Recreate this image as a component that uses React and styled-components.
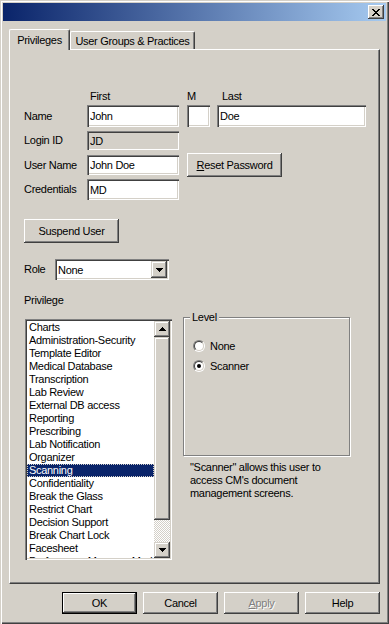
import styled, { createGlobalStyle } from "styled-components";

const GlobalStyle = createGlobalStyle`
  html, body {
    margin: 0;
    padding: 0;
    background: #d4d0c8;
  }
  body {
    font-family: "Liberation Sans", Arial, sans-serif;
    font-size: 11px;
    letter-spacing: -0.3px;
    color: #000;
  }
  * {
    box-sizing: border-box;
  }
`;

const privileges = [
  "Charts",
  "Administration-Security",
  "Template Editor",
  "Medical Database",
  "Transcription",
  "Lab Review",
  "External DB access",
  "Reporting",
  "Prescribing",
  "Lab Notification",
  "Organizer",
  "Scanning",
  "Confidentiality",
  "Break the Glass",
  "Restrict Chart",
  "Decision Support",
  "Break Chart Lock",
  "Facesheet",
  "Preferences Manager Module",
];

const raised =
  "inset -1px -1px 0 #404040, inset 1px 1px 0 #fff, inset -2px -2px 0 #808080";
const sunken =
  "inset 1px 1px 0 #808080, inset 2px 2px 0 #404040, inset -1px -1px 0 #fff, inset -2px -2px 0 #d4d0c8";

const Window = styled.div`
  width: 389px;
  height: 624px;
  padding: 3px;
  display: flex;
  flex-direction: column;
  background: #d4d0c8;
  box-shadow: inset 1px 1px 0 #d4d0c8, inset 2px 2px 0 #fff,
    inset -1px -1px 0 #404040, inset -2px -2px 0 #808080;
`;

const TitleBar = styled.div`
  height: 18px;
  flex: none;
  display: flex;
  align-items: center;
  justify-content: flex-end;
  padding-right: 2px;
  background: linear-gradient(to right, #0a246a, #a6caf0);
`;

const CloseButton = styled.div`
  width: 16px;
  height: 14px;
  display: flex;
  align-items: center;
  justify-content: center;
  background: #d4d0c8;
  box-shadow: ${raised};
`;

const TabStrip = styled.div`
  display: flex;
  align-items: flex-end;
  height: 20px;
  margin: 8px 0 0 6px;
  position: relative;
  z-index: 1;
`;

const Tab = styled.div`
  width: ${(p) => p.w}px;
  height: ${(p) => (p.active ? 21 : 18)}px;
  margin-bottom: ${(p) => (p.active ? -1 : 0)}px;
  padding-bottom: ${(p) => (p.active ? 1 : 0)}px;
  display: flex;
  align-items: center;
  justify-content: center;
  background: #d4d0c8;
  border-top: 1px solid #fff;
  border-left: 1px solid #fff;
  border-right: 1px solid #404040;
  border-radius: 2px 2px 0 0;
  box-shadow: inset -1px 0 0 #808080;
`;

const Panel = styled.div`
  width: 371px;
  height: 535px;
  margin-left: 6px;
  padding-left: 14px;
  display: flex;
  flex-direction: column;
  border-top: 1px solid #fff;
  border-left: 1px solid #fff;
  border-right: 1px solid #404040;
  border-bottom: 1px solid #404040;
  box-shadow: inset -1px -1px 0 #808080;
`;

const Row = styled.div`
  display: flex;
  align-items: center;
  height: ${(p) => p.h}px;
  margin-top: ${(p) => p.mt}px;
`;

const Label = styled.span`
  width: ${(p) => p.w}px;
  flex: none;
  line-height: 13px;
  white-space: nowrap;
`;

const TextBox = styled.input`
  width: ${(p) => p.w}px;
  height: ${(p) => p.h}px;
  margin-left: ${(p) => p.ml || 0}px;
  padding: 0 3px;
  border: none;
  outline: none;
  font: inherit;
  letter-spacing: inherit;
  color: #000;
  background: ${(p) => (p.disabled ? "#d4d0c8" : "#fff")};
  box-shadow: ${sunken};
`;

const Button = styled.div`
  width: ${(p) => p.w}px;
  height: ${(p) => p.h}px;
  margin-left: ${(p) => p.ml || 0}px;
  flex: none;
  display: flex;
  align-items: center;
  justify-content: center;
  background: #d4d0c8;
  color: ${(p) => (p.disabled ? "#808080" : "#000")};
  text-shadow: ${(p) => (p.disabled ? "1px 1px 0 #fff" : "none")};
  box-shadow: ${(p) =>
    p.primary
      ? "inset 0 0 0 1px #000, inset -2px -2px 0 #404040, inset 2px 2px 0 #fff, inset -3px -3px 0 #808080"
      : raised};
`;

const Select = styled.div`
  width: 114px;
  height: 21px;
  display: flex;
  align-items: center;
  padding: 2px;
  background: #fff;
  box-shadow: ${sunken};
`;

const SelectValue = styled.span`
  flex: 1;
  padding-left: 1px;
`;

const ArrowButton = styled.div`
  width: ${(p) => p.w || 16}px;
  height: ${(p) => p.h || 16}px;
  flex: none;
  display: flex;
  align-items: center;
  justify-content: center;
  background: #d4d0c8;
  box-shadow: inset -1px -1px 0 #404040, inset 1px 1px 0 #d4d0c8,
    inset -2px -2px 0 #808080, inset 2px 2px 0 #fff;
`;

const Lower = styled.div`
  display: flex;
  align-items: flex-start;
  margin-top: 10px;
`;

const ListBox = styled.div`
  width: 147px;
  height: 241px;
  margin: 2px 0 0 1px;
  padding: 2px;
  display: flex;
  background: #fff;
  box-shadow: ${sunken};
`;

const Items = styled.div`
  flex: 1;
  overflow: hidden;
`;

const Item = styled.div`
  height: 13px;
  line-height: 13px;
  padding-left: 2px;
  white-space: nowrap;
  color: ${(p) => (p.selected ? "#fff" : "#000")};
  background: ${(p) => (p.selected ? "#0a246a" : "transparent")};
  outline: ${(p) => (p.selected ? "1px dotted #d4d0c8" : "none")};
  outline-offset: -1px;
`;

const ScrollBar = styled.div`
  width: 16px;
  display: flex;
  flex-direction: column;
`;

const Thumb = styled.div`
  height: 183px;
  background: #d4d0c8;
  box-shadow: inset -1px -1px 0 #404040, inset 1px 1px 0 #d4d0c8,
    inset -2px -2px 0 #808080, inset 2px 2px 0 #fff;
`;

const Track = styled.div`
  flex: 1;
  background-image: conic-gradient(#fff 0 25%, #d4d0c8 0 50%, #fff 0 75%, #d4d0c8 0);
  background-size: 2px 2px;
`;

const RightColumn = styled.div`
  margin-left: 11px;
  display: flex;
  flex-direction: column;
`;

const Group = styled.div`
  width: 167px;
  height: 139px;
  padding-left: 9px;
  display: flex;
  flex-direction: column;
  border: 1px solid #808080;
  box-shadow: inset 1px 1px 0 #fff, 1px 1px 0 #fff;
`;

const Legend = styled.span`
  align-self: flex-start;
  margin: -7px 0 0 -3px;
  padding: 0 2px;
  line-height: 13px;
  background: #d4d0c8;
`;

const RadioRow = styled.div`
  display: flex;
  align-items: center;
  gap: 5px;
  height: 16px;
  margin-top: ${(p) => p.mt}px;
`;

const RadioOuter = styled.div`
  width: 12px;
  height: 12px;
  border-radius: 50%;
  border: 1px solid;
  border-color: #808080 #fff #fff #808080;
  display: flex;
`;

const RadioInner = styled.div`
  flex: 1;
  border-radius: 50%;
  border: 1px solid;
  border-color: #404040 #d4d0c8 #d4d0c8 #404040;
  background: #fff;
  display: flex;
  align-items: center;
  justify-content: center;
`;

const RadioDot = styled.div`
  width: 4px;
  height: 4px;
  border-radius: 50%;
  background: #000;
`;

const Note = styled.p`
  width: 150px;
  margin: 5px 0 0 7px;
  line-height: 13px;
`;

const Footer = styled.div`
  display: flex;
  justify-content: flex-end;
  gap: 6px;
  margin: 8px 6px 0 0;
`;

const CloseGlyph = () => (
  <svg width="8" height="7" viewBox="0 0 8 7" shapeRendering="crispEdges">
    <path
      d="M0 0h2v1H0zM6 0h2v1H6zM1 1h2v1H1zM5 1h2v1H5zM2 2h4v1H2zM3 3h2v1H3zM2 4h4v1H2zM1 5h2v1H1zM5 5h2v1H5zM0 6h2v1H0zM6 6h2v1H6z"
      fill="#000"
    />
  </svg>
);

const Arrow = ({ up }) => (
  <svg width="7" height="4" viewBox="0 0 7 4" shapeRendering="crispEdges">
    <path
      d={up ? "M3 0h1v1H3zM2 1h3v1H2zM1 2h5v1H1zM0 3h7v1H0z" : "M0 0h7v1H0zM1 1h5v1H1zM2 2h3v1H2zM3 3h1v1H3z"}
      fill="#000"
    />
  </svg>
);

const Radio = ({ checked, label, mt }) => (
  <RadioRow mt={mt}>
    <RadioOuter>
      <RadioInner>{checked && <RadioDot />}</RadioInner>
    </RadioOuter>
    <span>{label}</span>
  </RadioRow>
);

export default function App() {
  return (
    <>
      <GlobalStyle />
      <Window>
        <TitleBar>
          <CloseButton>
            <CloseGlyph />
          </CloseButton>
        </TitleBar>

        <TabStrip>
          <Tab active w={61}>Privileges</Tab>
          <Tab w={125}>User Groups &amp; Practices</Tab>
        </TabStrip>

        <Panel>
          <Row h={13} mt={40}>
            <Label w={66} />
            <Label w={97}>First</Label>
            <Label w={35}>M</Label>
            <Label w={40}>Last</Label>
          </Row>
          <Row h={22} mt={2}>
            <Label w={63}>Name</Label>
            <TextBox w={92} h={22} defaultValue="John" readOnly />
            <TextBox w={23} h={22} ml={8} defaultValue="" readOnly />
            <TextBox w={149} h={22} ml={7} defaultValue="Doe" readOnly />
          </Row>
          <Row h={19} mt={4}>
            <Label w={63}>Login ID</Label>
            <TextBox w={92} h={19} defaultValue="JD" disabled />
          </Row>
          <Row h={24} mt={3}>
            <Label w={63}>User Name</Label>
            <TextBox w={92} h={20} defaultValue="John Doe" readOnly />
            <Button w={95} h={24} ml={8}>
              <span>
                <u>R</u>eset Password
              </span>
            </Button>
          </Row>
          <Row h={21} mt={2}>
            <Label w={63}>Credentials</Label>
            <TextBox w={92} h={21} defaultValue="MD" readOnly />
          </Row>

          <Row h={24} mt={19}>
            <Button w={95} h={24}>Suspend User</Button>
          </Row>

          <Row h={21} mt={16}>
            <Label w={31}>Role</Label>
            <Select>
              <SelectValue>None</SelectValue>
              <ArrowButton w={16} h={17}>
                <Arrow />
              </ArrowButton>
            </Select>
          </Row>

          <Row h={13} mt={14}>
            <Label w={80}>Privilege</Label>
          </Row>

          <Lower>
            <ListBox>
              <Items>
                {privileges.map((p) => (
                  <Item key={p} selected={p === "Scanning"}>
                    {p}
                  </Item>
                ))}
              </Items>
              <ScrollBar>
                <ArrowButton>
                  <Arrow up />
                </ArrowButton>
                <Thumb />
                <Track />
                <ArrowButton>
                  <Arrow />
                </ArrowButton>
              </ScrollBar>
            </ListBox>

            <RightColumn>
              <Group>
                <Legend>Level</Legend>
                <Radio label="None" mt={14} />
                <Radio label="Scanner" checked mt={4} />
              </Group>
              <Note>"Scanner" allows this user to access CM's document management screens.</Note>
            </RightColumn>
          </Lower>
        </Panel>

        <Footer>
          <Button w={75} h={22} primary>OK</Button>
          <Button w={75} h={22}>Cancel</Button>
          <Button w={75} h={22} disabled>
            <span>
              <u>A</u>pply
            </span>
          </Button>
          <Button w={75} h={22}>Help</Button>
        </Footer>
      </Window>
    </>
  );
}
